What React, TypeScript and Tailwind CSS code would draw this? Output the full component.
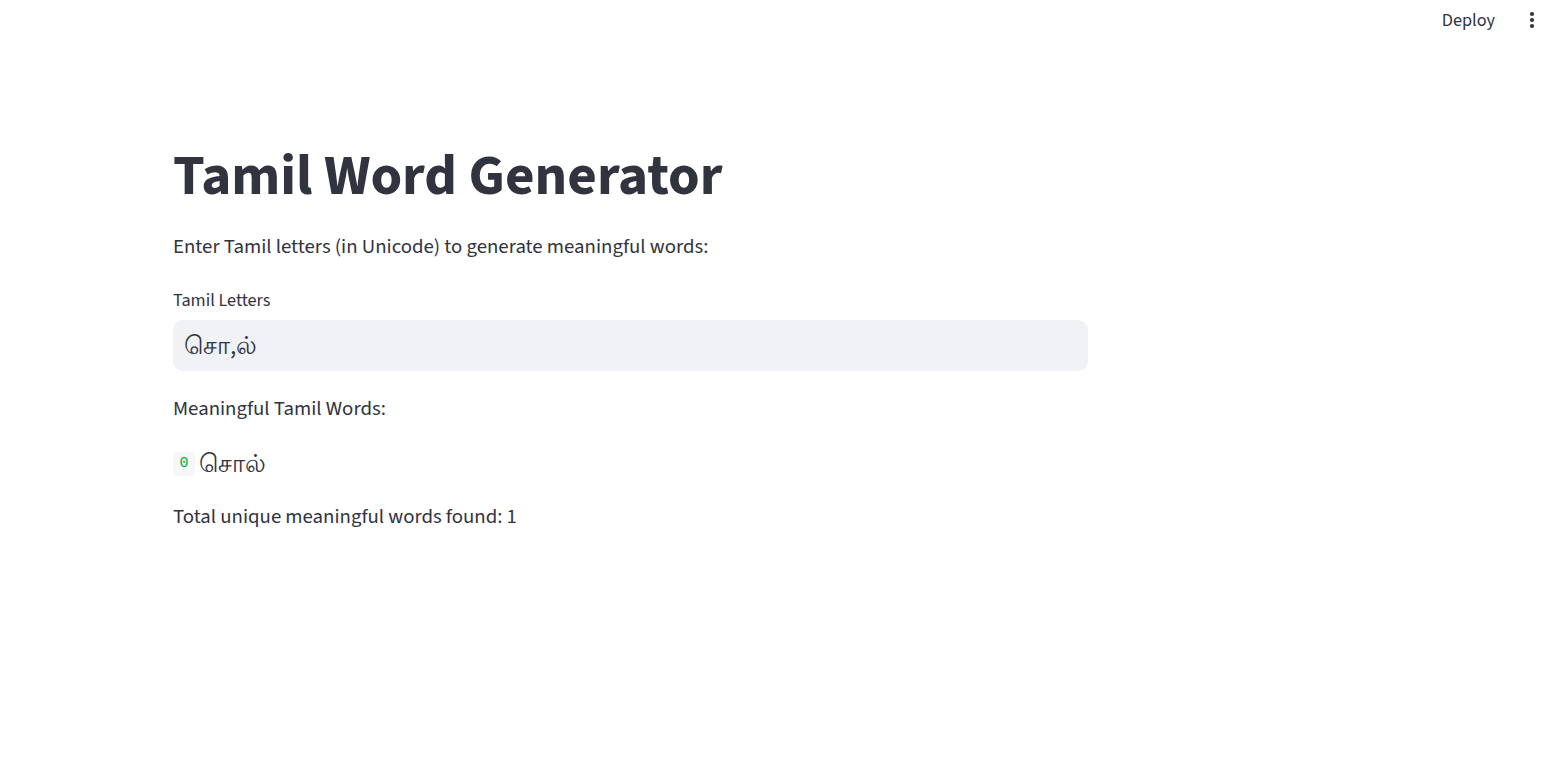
function MoreIcon() {
  return (
    <svg width="6" height="18" viewBox="0 0 6 18" className="fill-[#31333F]">
      <circle cx="3" cy="3" r="2.1" />
      <circle cx="3" cy="9" r="2.1" />
      <circle cx="3" cy="15" r="2.1" />
    </svg>
  );
}

export default function App() {
  return (
    <div className="min-h-screen bg-white text-[#31333F] font-['Source_Sans_3','Lato',sans-serif]">
      {/* Header */}
      <header className="h-[40px] flex items-center justify-end pr-[22px]">
        <button className="text-[18.2px] leading-[24px] text-[#31333F] mr-[34px]">Deploy</button>
        <button className="flex items-center">
          <MoreIcon />
        </button>
      </header>

      {/* Main */}
      <main className="pl-[173px]">
        <div className="w-[915px]">
          <h1 className="mt-[102px] text-[57.2px] leading-[68px] font-bold">
            Tamil Word Generator
          </h1>

          <p className="mt-[20px] text-[20.8px] leading-[33px]">
            Enter Tamil letters (in Unicode) to generate meaningful words:
          </p>

          <label className="block mt-[23px] text-[18.2px] leading-[29px]">Tamil Letters</label>
          <div className="mt-[5px] h-[51px] rounded-[10px] bg-[#F0F2F6] flex items-center pl-[11px]">
            <span className="text-[25px] leading-[30px] text-[#31333F]">சொ,ல்</span>
          </div>

          <p className="mt-[21px] text-[20.8px] leading-[33px]">Meaningful Tamil Words:</p>

          <div className="mt-[22px] h-[33px] flex items-center gap-[4px]">
            <span className="w-[22px] h-[24px] rounded-[4px] bg-[#F6F7F9] flex items-center justify-center pt-[2px] font-['Liberation_Mono',monospace] text-[15px] text-[#09AB3B]">
              0
            </span>
            <span className="text-[25px] leading-[30px]">சொல்</span>
          </div>

          <p className="mt-[20px] text-[20.8px] leading-[33px]">Total unique meaningful words found: 1</p>
        </div>
      </main>
    </div>
  );
}
